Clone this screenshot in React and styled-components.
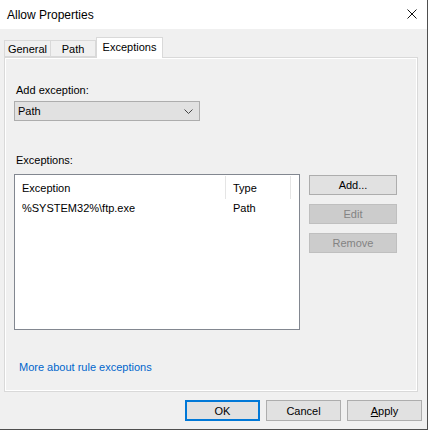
import React from 'react';
import styled, { createGlobalStyle } from 'styled-components';

const Global = createGlobalStyle`
    html, body {
        margin: 0;
        padding: 0;
        background: #ffffff;
    }
    body {
        font-family: "Liberation Sans", Arial, sans-serif;
        font-size: 11px;
        color: #000;
    }
`;

const Window = styled.div`
    width: 427px;
    height: 429px;
    background-color: #f0f0f0;
    border-right: 1px solid #4f4f4f;
    border-bottom: 1px solid #4f4f4f;
    display: flex;
    flex-direction: column;
`;

const TitleBar = styled.div`
    height: 29px;
    flex-shrink: 0;
    background-color: #fff;
    display: flex;
    align-items: center;
    justify-content: space-between;
    padding: 0 10px 0 7px;
    font-size: 12px;
`;

const Close = styled.svg`
    width: 10px;
    height: 10px;
    margin-top: -1px;
`;

const TabStrip = styled.div`
    margin-top: 8px;
    padding-left: 4px;
    height: 20px;
    display: flex;
    align-items: flex-end;
    position: relative;
    z-index: 1;
`;

const Tab = styled.div`
    box-sizing: border-box;
    height: ${({active}) => active ? '21px' : '17px'};
    width: ${({w}) => w}px;
    margin-bottom: ${({active}) => active ? '-1px' : '0'};
    border: 1px solid #d9d9d9;
    border-bottom: ${({active}) => active ? 'none' : '1px solid #d9d9d9'};
    border-left: ${({first, active}) => (first || active) ? '1px solid #d9d9d9' : 'none'};
    background-color: ${({active}) => active ? '#fff' : '#f0f0f0'};
    display: flex;
    align-items: ${({active}) => active ? 'flex-start' : 'center'};
    justify-content: center;
    padding-top: ${({active}) => active ? '3px' : '1px'};
`;

const Panel = styled.div`
    margin: 0 9px 0 4px;
    height: 307px;
    flex-shrink: 0;
    border: 1px solid #d9d9d9;
    box-shadow: inset 1px 1px 0 #fff, inset -1px -1px 0 #fff;
    display: flex;
    flex-direction: column;
    padding: 26px 0 0 9px;
`;

const Label = styled.div`
    line-height: 13px;
    margin-left: 2px;
    margin-top: ${({gap}) => gap || 0}px;
`;

const Combo = styled.div`
    box-sizing: border-box;
    width: 186px;
    height: 20px;
    margin-top: 4px;
    border: 1px solid #adadad;
    background-color: #e1e1e1;
    display: flex;
    align-items: center;
    justify-content: space-between;
    padding: 0 6px 0 3px;
`;

const Chevron = styled.svg`
    width: 9px;
    height: 5px;
`;

const ListArea = styled.div`
    display: flex;
    gap: 9px;
    margin-top: 7px;
`;

const ListBox = styled.div`
    box-sizing: border-box;
    width: 286px;
    height: 156px;
    border: 1px solid #828790;
    background-color: #fff;
    padding-top: 1px;
`;

const Row = styled.div`
    display: flex;
    height: ${({head}) => head ? '23px' : '17px'};
    align-items: center;
`;

const Cell = styled.div`
    box-sizing: border-box;
    width: ${({w}) => w}px;
    height: 100%;
    display: flex;
    align-items: center;
    padding-left: 7px;
    border-right: ${({divider}) => divider ? '1px solid #e5e5e5' : 'none'};
`;

const Buttons = styled.div`
    display: flex;
    flex-direction: column;
    gap: 9px;
    padding-top: 1px;
`;

const Button = styled.div`
    box-sizing: border-box;
    width: ${({w}) => w || 88}px;
    height: ${({h}) => h || 20}px;
    display: flex;
    align-items: center;
    justify-content: center;
    background-color: ${({disabled}) => disabled ? '#cccccc' : '#e1e1e1'};
    border: ${({primary, disabled}) => primary ? '2px solid #0078d7' : disabled ? '1px solid #bfbfbf' : '1px solid #adadad'};
    color: ${({disabled}) => disabled ? '#838383' : '#000'};
`;

const Link = styled.div`
    margin-top: 31px;
    margin-left: 5px;
    line-height: 13px;
    color: #0066cc;
`;

const Footer = styled.div`
    display: flex;
    justify-content: flex-end;
    gap: 6px;
    padding: 8px 5px 0 0;
`;

export default function App() {
    return (
        <>
            <Global/>
            <Window>
                <TitleBar>
                    <span>Allow Properties</span>
                    <Close viewBox="0 0 10 10">
                        <path d="M0.5 0.5 L9.5 9.5 M9.5 0.5 L0.5 9.5" stroke="#111" strokeWidth="1" fill="none"/>
                    </Close>
                </TitleBar>
                <TabStrip>
                    <Tab first w={47}>General</Tab>
                    <Tab w={45}>Path</Tab>
                    <Tab active w={67}>Exceptions</Tab>
                </TabStrip>
                <Panel>
                    <Label>Add exception:</Label>
                    <Combo>
                        <span>Path</span>
                        <Chevron viewBox="0 0 9 5">
                            <path d="M0.5 0.5 L4.5 4.5 L8.5 0.5" stroke="#444" strokeWidth="1" fill="none"/>
                        </Chevron>
                    </Combo>
                    <Label gap={33}>Exceptions:</Label>
                    <ListArea>
                        <ListBox>
                            <Row head>
                                <Cell w={211} divider>Exception</Cell>
                                <Cell w={65} divider>Type</Cell>
                            </Row>
                            <Row>
                                <Cell w={211}>%SYSTEM32%\ftp.exe</Cell>
                                <Cell w={65}>Path</Cell>
                            </Row>
                        </ListBox>
                        <Buttons>
                            <Button>Add...</Button>
                            <Button disabled>Edit</Button>
                            <Button disabled>Remove</Button>
                        </Buttons>
                    </ListArea>
                    <Link>More about rule exceptions</Link>
                </Panel>
                <Footer>
                    <Button primary w={75} h={21}>OK</Button>
                    <Button w={75} h={21}>Cancel</Button>
                    <Button w={75} h={21}><span><u>A</u>pply</span></Button>
                </Footer>
            </Window>
        </>
    );
}
